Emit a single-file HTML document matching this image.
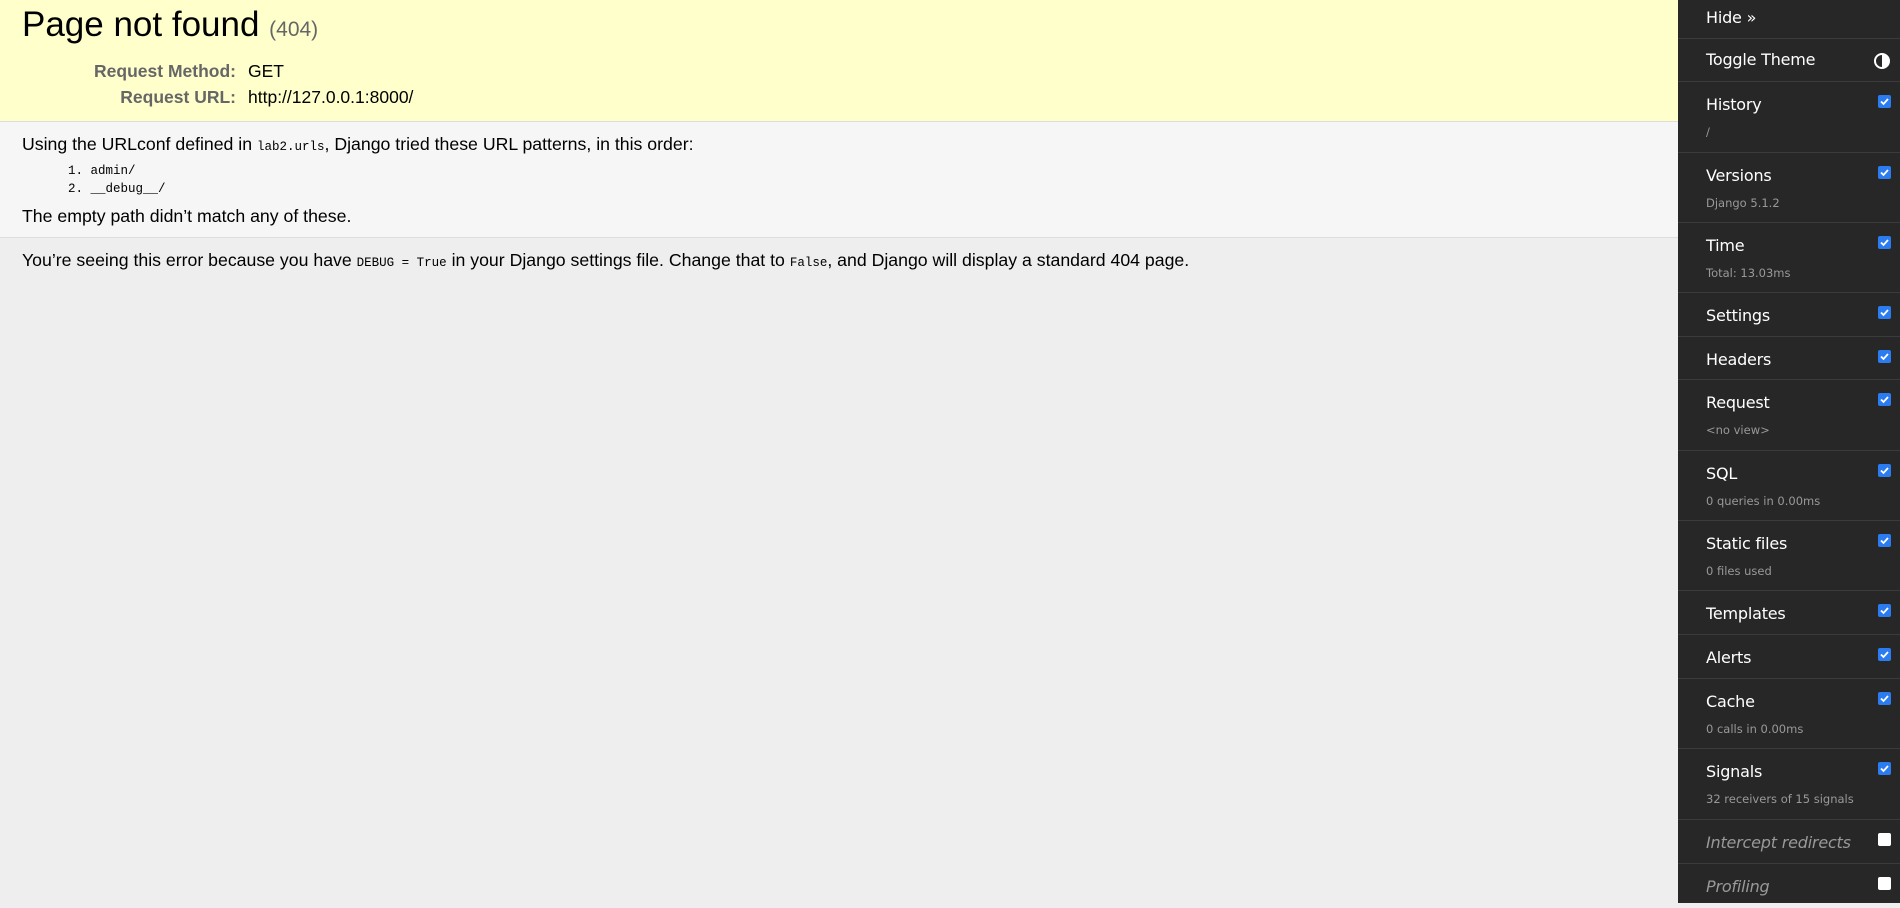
<!DOCTYPE html>
<html><head><meta charset="utf-8"><style>
*{margin:0;padding:0;box-sizing:border-box}
html,body{width:1900px;height:903px;overflow:hidden;background:#eee;font-family:"Liberation Sans",Arial,sans-serif;color:#000}
#summary{position:absolute;left:0;top:0;width:1900px;height:122px;background:#ffc;border-bottom:1px solid #ddd}
h1{position:absolute;left:22px;top:5px;font-weight:normal;font-size:35px;white-space:nowrap}
h1 span{font-size:21px;color:#666}
.meta{position:absolute;font-size:17.5px;white-space:nowrap}
.meta.k{right:calc(1900px - 236px);color:#666;font-weight:bold;text-align:right}
.meta.v{left:248px}
#info{position:absolute;left:0;top:122px;width:1900px;height:116px;background:#f6f6f6;border-bottom:1px solid #ddd}
.t{position:absolute;left:22px;font-size:17.7px;white-space:nowrap}
code{font-family:"Liberation Mono",monospace;font-size:12.5px}
.li{position:absolute;left:68px;font-family:"Liberation Mono",monospace;font-size:12.5px;white-space:nowrap}
#tb{position:absolute;left:1678px;top:0;width:222px;height:903px;background:#272727;font-family:"DejaVu Sans","Liberation Sans",sans-serif}
.r{position:absolute;left:0;width:222px;border-bottom:1px solid #3b3b3b}
.r .h{position:absolute;left:28px;top:13px;font-size:16px;color:#fff;white-space:nowrap;letter-spacing:-0.2px}
.r .s{position:absolute;left:28px;top:43px;font-size:11.5px;color:#999;white-space:nowrap}
.r .h.i{color:#999;font-style:italic}
.cb{position:absolute;left:200px;top:13px;width:13px;height:13px;background:#2b7cf0;border-radius:2px}
.cb svg{position:absolute;left:1px;top:1px}
.cb.off{background:#fff}
</style></head><body>
<div id="summary">
<h1>Page not found <span>(404)</span></h1>
<div class="meta k" style="top:61px">Request Method:</div><div class="meta v" style="top:61px">GET</div>
<div class="meta k" style="top:87px">Request URL:</div><div class="meta v" style="top:87px">http://127.0.0.1:8000/</div>
</div>
<div id="info">
<div class="t" style="top:12px">Using the URLconf defined in <code>lab2.urls</code>, Django tried these URL patterns, in this order:</div>
<div class="li" style="top:42px">1. admin/</div>
<div class="li" style="top:60px">2. __debug__/</div>
<div class="t" style="top:84px">The empty path didn’t match any of these.</div>
</div>
<div class="t" style="top:250px">You’re seeing this error because you have <code>DEBUG = True</code> in your Django settings file. Change that to <code>False</code>, and Django will display a standard 404 page.</div>

<div id="tb">
<div class="r" style="top:0;height:39px"><div class="h" style="top:8px">Hide »</div></div>
<div class="r" style="top:39px;height:43px"><div class="h" style="top:11px">Toggle Theme</div>
<svg style="position:absolute;left:195px;top:13px" width="18" height="18" viewBox="0 0 18 18"><circle cx="9" cy="9" r="7" fill="none" stroke="#fff" stroke-width="2"/><path d="M9 2a7 7 0 0 1 0 14z" fill="#fff"/></svg></div>
<div class="r" style="top:82px;height:71px"><div class="h">History</div><div class="s">/</div><div class="cb"><svg width="11" height="11" viewBox="0 0 11 11"><path d="M2 5.5l2.5 2.5L9 3" stroke="#fff" stroke-width="1.8" fill="none"/></svg></div></div>
<div class="r" style="top:153px;height:70px"><div class="h">Versions</div><div class="s">Django 5.1.2</div><div class="cb"><svg width="11" height="11" viewBox="0 0 11 11"><path d="M2 5.5l2.5 2.5L9 3" stroke="#fff" stroke-width="1.8" fill="none"/></svg></div></div>
<div class="r" style="top:223px;height:70px"><div class="h">Time</div><div class="s">Total: 13.03ms</div><div class="cb"><svg width="11" height="11" viewBox="0 0 11 11"><path d="M2 5.5l2.5 2.5L9 3" stroke="#fff" stroke-width="1.8" fill="none"/></svg></div></div>
<div class="r" style="top:293px;height:44px"><div class="h">Settings</div><div class="cb"><svg width="11" height="11" viewBox="0 0 11 11"><path d="M2 5.5l2.5 2.5L9 3" stroke="#fff" stroke-width="1.8" fill="none"/></svg></div></div>
<div class="r" style="top:337px;height:43px"><div class="h">Headers</div><div class="cb"><svg width="11" height="11" viewBox="0 0 11 11"><path d="M2 5.5l2.5 2.5L9 3" stroke="#fff" stroke-width="1.8" fill="none"/></svg></div></div>
<div class="r" style="top:380px;height:71px"><div class="h">Request</div><div class="s">&lt;no view&gt;</div><div class="cb"><svg width="11" height="11" viewBox="0 0 11 11"><path d="M2 5.5l2.5 2.5L9 3" stroke="#fff" stroke-width="1.8" fill="none"/></svg></div></div>
<div class="r" style="top:451px;height:70px"><div class="h">SQL</div><div class="s">0 queries in 0.00ms</div><div class="cb"><svg width="11" height="11" viewBox="0 0 11 11"><path d="M2 5.5l2.5 2.5L9 3" stroke="#fff" stroke-width="1.8" fill="none"/></svg></div></div>
<div class="r" style="top:521px;height:70px"><div class="h">Static files</div><div class="s">0 files used</div><div class="cb"><svg width="11" height="11" viewBox="0 0 11 11"><path d="M2 5.5l2.5 2.5L9 3" stroke="#fff" stroke-width="1.8" fill="none"/></svg></div></div>
<div class="r" style="top:591px;height:44px"><div class="h">Templates</div><div class="cb"><svg width="11" height="11" viewBox="0 0 11 11"><path d="M2 5.5l2.5 2.5L9 3" stroke="#fff" stroke-width="1.8" fill="none"/></svg></div></div>
<div class="r" style="top:635px;height:44px"><div class="h">Alerts</div><div class="cb"><svg width="11" height="11" viewBox="0 0 11 11"><path d="M2 5.5l2.5 2.5L9 3" stroke="#fff" stroke-width="1.8" fill="none"/></svg></div></div>
<div class="r" style="top:679px;height:70px"><div class="h">Cache</div><div class="s">0 calls in 0.00ms</div><div class="cb"><svg width="11" height="11" viewBox="0 0 11 11"><path d="M2 5.5l2.5 2.5L9 3" stroke="#fff" stroke-width="1.8" fill="none"/></svg></div></div>
<div class="r" style="top:749px;height:71px"><div class="h">Signals</div><div class="s">32 receivers of 15 signals</div><div class="cb"><svg width="11" height="11" viewBox="0 0 11 11"><path d="M2 5.5l2.5 2.5L9 3" stroke="#fff" stroke-width="1.8" fill="none"/></svg></div></div>
<div class="r" style="top:820px;height:44px"><div class="h i">Intercept redirects</div><div class="cb off"></div></div>
<div class="r" style="top:864px;height:44px;border:none"><div class="h i">Profiling</div><div class="cb off"></div></div>
</div>
</body></html>
